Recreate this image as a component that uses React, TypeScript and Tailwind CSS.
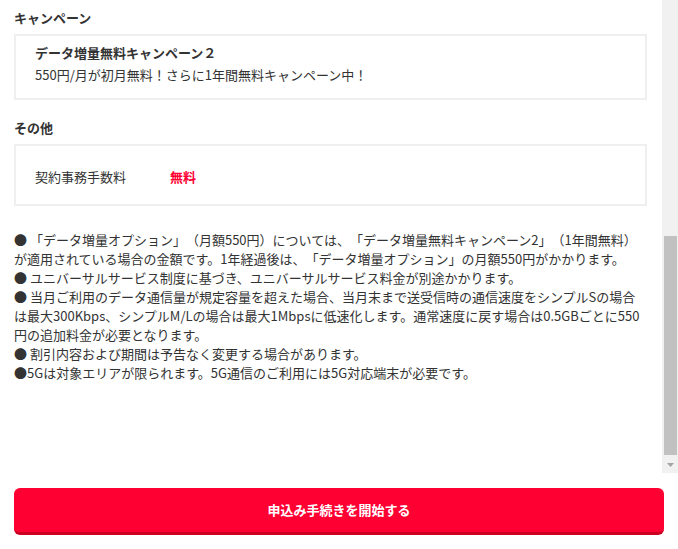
import React from "react";

const font = {
    fontFamily: '"Noto Sans CJK JP", "Noto Sans", sans-serif',
};

const noteLines: string[][] = [
    [
        "● 「データ増量オプション」（月額550円）については、「データ増量無料キャンペーン2」（1年間無料）",
        "が適用されている場合の金額です。1年経過後は、「データ増量オプション」の月額550円がかかります。",
    ],
    ["● ユニバーサルサービス制度に基づき、ユニバーサルサービス料金が別途かかります。"],
    [
        "● 当月ご利用のデータ通信量が規定容量を超えた場合、当月末まで送受信時の通信速度をシンプルSの場合",
        "は最大300Kbps、シンプルM/Lの場合は最大1Mbpsに低速化します。通常速度に戻す場合は0.5GBごとに550",
        "円の追加料金が必要となります。",
    ],
    ["● 割引内容および期間は予告なく変更する場合があります。"],
    ["●5Gは対象エリアが限られます。5G通信のご利用には5G対応端末が必要です。"],
];

const SectionTitle = ({ children, className = "" }: { children: React.ReactNode; className?: string }) => (
    <h3 className={`font-bold text-[13px] leading-[22px] text-[#333333] mb-[5px] ${className}`}>
        {children}
    </h3>
);

const Scrollbar = () => (
    <div className="w-[16px] h-full bg-[#f1f1f1] flex flex-col">
        <div className="mt-[236px] h-[219px] ml-[2px] mr-[1px] bg-[#c1c1c1]" />
        <div className="mt-auto h-[16px] flex items-center justify-center">
            <svg width="7" height="4" viewBox="0 0 7 4">
                <polygon points="0,0 7,0 3.5,4" fill="#a3a3a3" />
            </svg>
        </div>
    </div>
);

const App = () => {
    return (
        <div
            className="w-[678px] h-[549px] bg-white flex flex-col overflow-hidden [text-spacing-trim:space-all]"
            style={font}
        >
            <div className="h-[473px] flex">
                <div className="flex-1 overflow-hidden pl-[14px] pr-[15px] pt-[7px] text-[#333333]">
                    <SectionTitle>キャンペーン</SectionTitle>
                    <div className="border-2 border-[#efefef] pl-[19px] pr-4 pt-[6px] pb-[12px] text-[13px] leading-[22px]">
                        <p className="font-bold">データ増量無料キャンペーン２</p>
                        <p>550円/月が初月無料！さらに1年間無料キャンペーン中！</p>
                    </div>

                    <SectionTitle className="mt-[17px]">その他</SectionTitle>
                    <div className="border-2 border-[#efefef] pl-[19px] pr-4 pt-[20px] pb-[16px] text-[13px] leading-[22px] flex">
                        <span className="w-[135px]">契約事務手数料</span>
                        <span className="font-bold text-[#ff0033]">無料</span>
                    </div>

                    <div className="mt-[24px] text-[13px] leading-[19px]">
                        {noteLines.map((lines, i) => (
                            <p key={i} className="whitespace-nowrap">
                                {lines.map((line, j) => (
                                    <React.Fragment key={j}>
                                        {j > 0 && <br />}
                                        {line}
                                    </React.Fragment>
                                ))}
                            </p>
                        ))}
                    </div>
                </div>
                <Scrollbar />
            </div>

            <div className="px-[14px] pt-[15px]">
                <button
                    type="button"
                    className="w-full h-[47px] bg-[#ff0033] border-b-[3px] border-[#cc0020] rounded-[6px] text-white font-bold text-[13px] flex items-center justify-center"
                >
                    申込み手続きを開始する
                </button>
            </div>
        </div>
    );
};

export default App;
